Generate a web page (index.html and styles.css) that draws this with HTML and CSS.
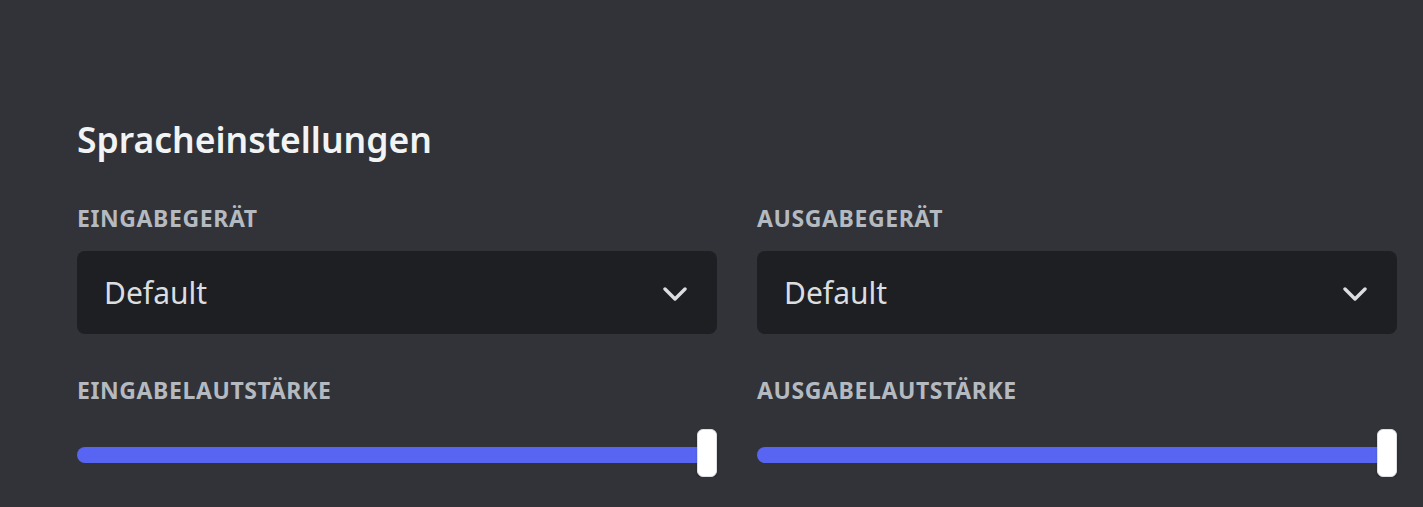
FILE: index.html
```html
<!DOCTYPE html>
<html lang="de">
<head>
    <meta charset="UTF-8">
    <meta name="viewport" content="width=device-width, initial-scale=1.0">
    <title>Spracheinstellungen</title>
    <link rel="stylesheet" href="styles.css">
</head>
<body>
    <div class="settings">
        <h2 class="title">Spracheinstellungen</h2>
        <div class="columns">
            <div class="column">
                <h5 class="eyebrow">Eingabegerät</h5>
                <div class="select">
                    <span class="select-value">Default</span>
                    <svg class="chevron" width="24" height="24" viewBox="0 0 24 24">
                        <path d="M2 8l10 10 10-10" fill="none" stroke="currentColor" stroke-width="3.4" stroke-linecap="round" stroke-linejoin="round"/>
                    </svg>
                </div>
                <h5 class="eyebrow eyebrow-volume">Eingabelautstärke</h5>
                <div class="slider">
                    <div class="track"></div>
                    <div class="grabber"></div>
                </div>
            </div>
            <div class="column">
                <h5 class="eyebrow">Ausgabegerät</h5>
                <div class="select">
                    <span class="select-value">Default</span>
                    <svg class="chevron" width="24" height="24" viewBox="0 0 24 24">
                        <path d="M2 8l10 10 10-10" fill="none" stroke="currentColor" stroke-width="3.4" stroke-linecap="round" stroke-linejoin="round"/>
                    </svg>
                </div>
                <h5 class="eyebrow eyebrow-volume">Ausgabelautstärke</h5>
                <div class="slider">
                    <div class="track"></div>
                    <div class="grabber"></div>
                </div>
            </div>
        </div>
    </div>
</body>
</html>
```

FILE: styles.css
```css
body {
    margin: 0;
    background-color: #313338;
    font-family: "Noto Sans", sans-serif;
}

.settings {
    padding: 117px 26px 0 77px;
}

.title {
    margin: 0;
    font-size: 35.5px;
    line-height: 44px;
    font-weight: 600;
    color: #f2f3f5;
}

.columns {
    display: grid;
    grid-template-columns: 1fr 1fr;
    column-gap: 40px;
    margin-top: 44px;
}

.eyebrow {
    margin: 0 0 20px 0;
    font-size: 23px;
    line-height: 26px;
    font-weight: 700;
    text-transform: uppercase;
    color: #b5bac1;
    letter-spacing: 0.6px;
}

.eyebrow-volume {
    margin-top: 43px;
}

.select {
    display: flex;
    align-items: center;
    justify-content: space-between;
    height: 83px;
    padding: 0 30px 0 27px;
    background-color: #1e1f22;
    border-radius: 8px;
    box-sizing: border-box;
}

.select-value {
    font-size: 30px;
    color: #dbdee1;
}

.chevron {
    color: #dbdee1;
}

.slider {
    position: relative;
    height: 48px;
    margin-top: 26px;
}

.track {
    position: absolute;
    left: 0;
    right: 10px;
    top: 18px;
    height: 16px;
    background-color: #5865f2;
    border-radius: 8px 0 0 8px;
}

.grabber {
    position: absolute;
    right: 0;
    top: 0;
    width: 20px;
    height: 48px;
    box-sizing: border-box;
    background-color: #fff;
    border: 1px solid #dcdfe3;
    border-radius: 6px;
    box-shadow: 0 3px 1px rgba(0, 0, 0, 0.05), 0 2px 2px rgba(0, 0, 0, 0.1), 0 3px 3px rgba(0, 0, 0, 0.05);
}
```
